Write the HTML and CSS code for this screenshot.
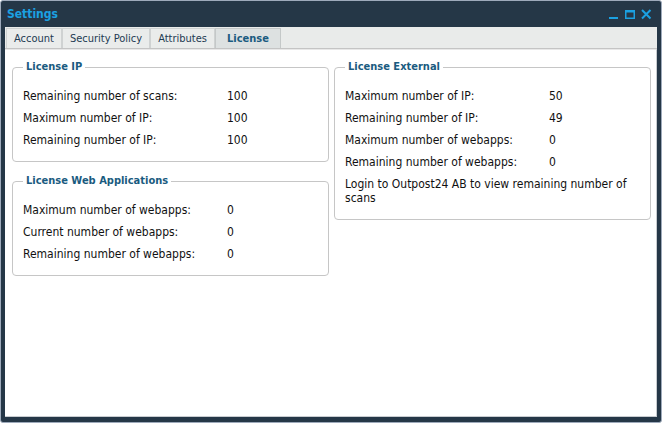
FILE: index.html
```html
<!DOCTYPE html>
<html lang="en">
<head>
    <meta charset="UTF-8">
    <title>Settings</title>
    <link rel="stylesheet" href="styles.css">
</head>
<body>
    <div class="window">
        <div class="title-bar">
            <span class="title">Settings</span>
            <div class="controls">
                <svg width="11" height="11" viewBox="0 0 11 11"><rect x="0" y="8" width="9" height="2" fill="#1ba1e2"/></svg>
                <svg width="11" height="11" viewBox="0 0 11 11"><rect x="0.75" y="1.75" width="8.5" height="7.5" fill="none" stroke="#1ba1e2" stroke-width="1.5"/><rect x="0" y="1" width="10" height="2.5" fill="#1ba1e2"/></svg>
                <svg width="11" height="11" viewBox="0 0 11 11"><path d="M1 1 L9.5 9.5 M9.5 1 L1 9.5" stroke="#1ba1e2" stroke-width="2"/></svg>
            </div>
        </div>
        <div class="tabs">
            <div class="tab">Account</div>
            <div class="tab">Security Policy</div>
            <div class="tab">Attributes</div>
            <div class="tab active">License</div>
        </div>
        <div class="content">
            <div class="column">
                <fieldset class="box">
                    <legend>License IP</legend>
                    <div class="row"><span class="label">Remaining number of scans:</span><span>100</span></div>
                    <div class="row"><span class="label">Maximum number of IP:</span><span>100</span></div>
                    <div class="row"><span class="label">Remaining number of IP:</span><span>100</span></div>
                </fieldset>
                <fieldset class="box">
                    <legend>License Web Applications</legend>
                    <div class="row"><span class="label">Maximum number of webapps:</span><span>0</span></div>
                    <div class="row"><span class="label">Current number of webapps:</span><span>0</span></div>
                    <div class="row"><span class="label">Remaining number of webapps:</span><span>0</span></div>
                </fieldset>
            </div>
            <div class="column">
                <fieldset class="box">
                    <legend>License External</legend>
                    <div class="row"><span class="label">Maximum number of IP:</span><span>50</span></div>
                    <div class="row"><span class="label">Remaining number of IP:</span><span>49</span></div>
                    <div class="row"><span class="label">Maximum number of webapps:</span><span>0</span></div>
                    <div class="row"><span class="label">Remaining number of webapps:</span><span>0</span></div>
                    <div class="note">Login to Outpost24 AB to view remaining number of scans</div>
                </fieldset>
            </div>
        </div>
    </div>
</body>
</html>
```

FILE: styles.css
```css
body {
    margin: 0;
    background: #ffffff;
    font-family: "DejaVu Sans Condensed", "DejaVu Sans", sans-serif;
    font-size: 12px;
    color: #111;
}
.window {
    width: 662px;
    height: 423px;
    box-sizing: border-box;
    border: 1px solid #9eaabb;
    border-radius: 3px;
    background: #253747;
    padding: 0 4px 5px 4px;
    display: flex;
    flex-direction: column;
}
.title-bar {
    height: 26px;
    display: flex;
    align-items: center;
    justify-content: space-between;
    padding: 0 2px 0 2px;
}
.title {
    color: #1ba1e2;
    font-weight: bold;
    font-size: 12px;
}
.controls {
    display: flex;
    gap: 5px;
    padding-right: 3px;
}
.tabs {
    background: #e9ebea;
    height: 21px;
    display: flex;
    border-bottom: 1px solid #c4c4c4;
    padding-left: 1px;
    font-size: 11px;
}
.tab {
    border: 1px solid #cfd2d2;
    border-bottom: none;
    margin-top: 1px;
    padding: 0 7px;
    line-height: 19px;
    color: #1d3a52;
    background: #eaeceb;
}
.tab.active {
    background: #dde1e1;
    border-color: #c4c8c8;
    font-weight: bold;
    color: #1a5b80;
    padding: 0 11px;
}
.content {
    flex: 1;
    background: #ffffff;
    border-top: 1px solid #e8e8e8;
    border-right: 1px solid #c8ccd0;
    border-bottom: 1px solid #c8ccd0;
    display: flex;
    gap: 5px;
    padding: 10px 5px 0 7px;
    align-items: flex-start;
}
.column {
    flex: 1;
    display: flex;
    flex-direction: column;
    gap: 12px;
}
.box {
    margin: 0;
    border: 1px solid #c6c6c6;
    border-radius: 4px;
    padding: 11px 10px 10px 10px;
}
.box legend {
    font-weight: bold;
    font-size: 11px;
    line-height: 14px;
    color: #1a5b80;
    padding: 0 3px;
    margin-left: 0;
}
.row {
    display: flex;
    line-height: 22px;
}
.row .label {
    width: 204px;
}
.note {
    line-height: 14px;
    padding-top: 4px;
    margin-bottom: 4px;
}
```
